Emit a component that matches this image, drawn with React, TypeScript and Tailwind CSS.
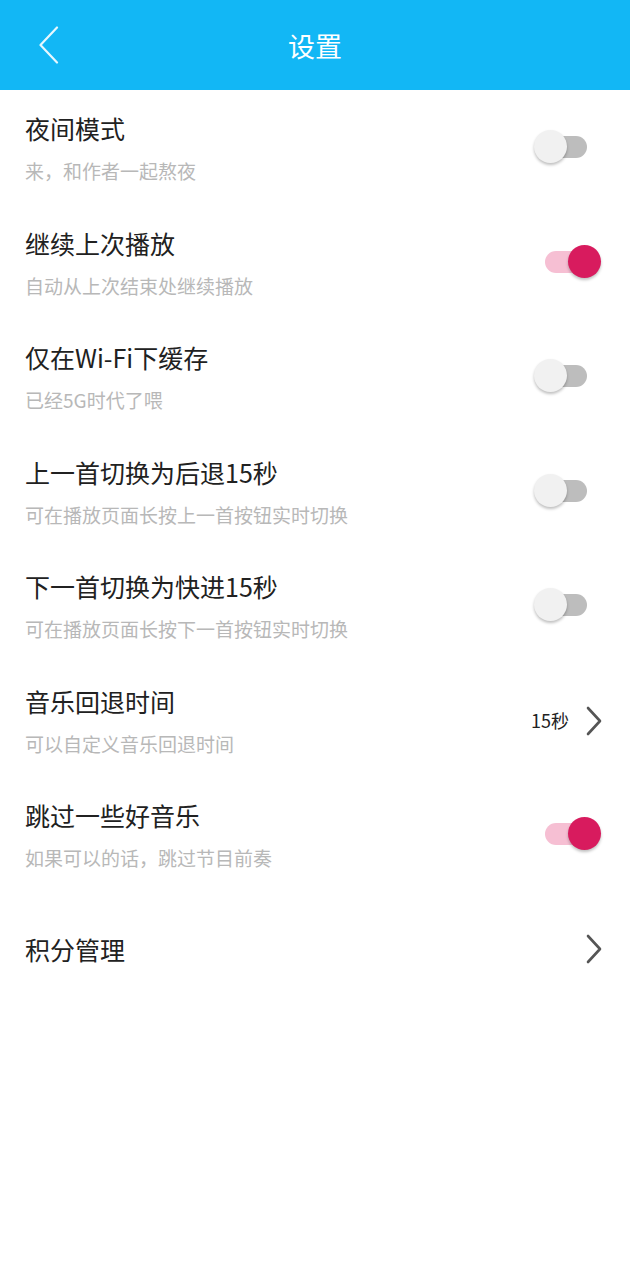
import { useState } from 'react';

type Item =
  | { title: string; desc: string; kind: 'switch'; on: boolean }
  | { title: string; desc: string; kind: 'value'; value: string };

const items: Item[] = [
  { title: '夜间模式', desc: '来，和作者一起熬夜', kind: 'switch', on: false },
  { title: '继续上次播放', desc: '自动从上次结束处继续播放', kind: 'switch', on: true },
  { title: '仅在Wi-Fi下缓存', desc: '已经5G时代了喂', kind: 'switch', on: false },
  { title: '上一首切换为后退15秒', desc: '可在播放页面长按上一首按钮实时切换', kind: 'switch', on: false },
  { title: '下一首切换为快进15秒', desc: '可在播放页面长按下一首按钮实时切换', kind: 'switch', on: false },
  { title: '音乐回退时间', desc: '可以自定义音乐回退时间', kind: 'value', value: '15秒' },
  { title: '跳过一些好音乐', desc: '如果可以的话，跳过节目前奏', kind: 'switch', on: true },
];

function Toggle({ initial }: { initial: boolean }) {
  const [on, setOn] = useState(initial);
  return (
    <button onClick={() => setOn(!on)} className="relative w-[67px] h-[34px] shrink-0">
      <span
        className={`absolute left-[11px] top-[6px] w-[42px] h-[22px] rounded-full ${
          on ? 'bg-[#f6bfd3]' : 'bg-[#bdbdbd]'
        }`}
      />
      <span
        className={`absolute top-0 w-[33px] h-[33px] rounded-full shadow-[0_2px_3px_rgba(0,0,0,0.25)] ${
          on ? 'left-[34px] bg-[#d81b5e]' : 'left-0 bg-[#f1f1f1]'
        }`}
      />
    </button>
  );
}

function Chevron() {
  return (
    <svg width="18" height="30" viewBox="0 0 18 30" fill="none">
      <path d="M3 2l12 13L3 28" stroke="#555" strokeWidth="2.6" strokeLinecap="round" strokeLinejoin="round" />
    </svg>
  );
}

export default function App() {
  return (
    <div
      className="w-[630px] h-[1280px] bg-white text-[#212121]"
      style={{ fontFamily: '"Noto Sans CJK SC", "Noto Sans", sans-serif' }}
    >
      {/* Header */}
      <header className="relative h-[90px] bg-[#12b7f5] flex items-center justify-center">
        <button className="absolute left-[38px] top-[26px]">
          <svg width="22" height="38" viewBox="0 0 22 38" fill="none">
            <path d="M19 1.5L2.5 19 19 36.5" stroke="#e6f7fe" strokeWidth="2.2" strokeLinecap="round" strokeLinejoin="round" />
          </svg>
        </button>
        <h1 className="text-white text-[27px] leading-none">设置</h1>
      </header>

      {/* Items */}
      <div>
        {items.map((item) => (
          <div key={item.title} className="h-[114.5px] pl-[25px] pr-[29px] flex justify-between">
            <div className="pt-[22px]">
              <div className="text-[25px] leading-[32px]">{item.title}</div>
              <div className="mt-[14px] text-[19px] leading-[26px] text-[#b8b8b8]">{item.desc}</div>
            </div>
            <div className="flex items-center">
              {item.kind === 'switch' ? (
                <Toggle initial={item.on} />
              ) : (
                <div className="flex items-center gap-[16px] pt-[2px] -mr-[2px]">
                  <span className="text-[18px] text-[#222]">{item.value}</span>
                  <Chevron />
                </div>
              )}
            </div>
          </div>
        ))}

        <div className="h-[114px] pl-[25px] pr-[27px] flex items-center justify-between">
          <div className="text-[25px] leading-[32px]">积分管理</div>
          <Chevron />
        </div>
      </div>
    </div>
  );
}
